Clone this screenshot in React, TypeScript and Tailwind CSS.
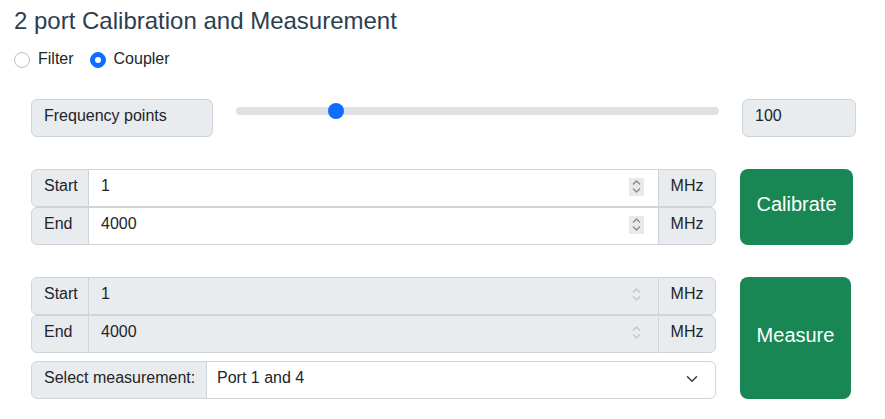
import React from "react";

function Radio({ checked, label }: { checked?: boolean; label: string }) {
  return (
    <label className="flex items-center mr-4">
      {checked ? (
        <span className="w-4 h-4 rounded-full bg-[#0d6efd] border border-[#0d6efd] flex items-center justify-center">
          <span className="w-[6px] h-[6px] rounded-full bg-white" />
        </span>
      ) : (
        <span className="w-4 h-4 rounded-full bg-white border border-[#bfbfbf]" />
      )}
      <span className="ml-2 leading-6 pb-[2px]">{label}</span>
    </label>
  );
}

function Spinner({ disabled }: { disabled?: boolean }) {
  const c = disabled ? "#c4c4c4" : "#8a8a8a";
  return (
    <div
      className={`absolute right-[14px] top-[9px] w-[15px] h-[18px] flex flex-col items-center justify-center gap-[3px] ${
        disabled ? "" : "bg-[#e9e9ed]"
      }`}
    >
      <svg width="9" height="5" viewBox="0 0 9 5" fill="none" stroke={c} strokeWidth="1.3">
        <path d="M1 4.5 4.5 1 8 4.5" />
      </svg>
      <svg width="9" height="5" viewBox="0 0 9 5" fill="none" stroke={c} strokeWidth="1.3">
        <path d="M1 0.5 4.5 4 8 0.5" />
      </svg>
    </div>
  );
}

function NumRow({
  label,
  labelW,
  value,
  disabled,
}: {
  label: string;
  labelW: string;
  value: string;
  disabled?: boolean;
}) {
  return (
    <div className="flex h-[38px]">
      <div
        className={`${labelW} shrink-0 flex items-center px-3 pb-1 bg-[#e9ecef] border border-[#ced4da] rounded-l-[6px]`}
      >
        {label}
      </div>
      <div className="relative flex-1 min-w-0 -ml-px">
        <input
          type="number"
          defaultValue={value}
          disabled={disabled}
          className={`w-full h-full px-3 pb-1 border-y border-l border-[#ced4da] outline-none text-[#212529] [appearance:textfield] [&::-webkit-inner-spin-button]:appearance-none [&::-webkit-outer-spin-button]:appearance-none ${
            disabled ? "bg-[#e9ecef]" : "bg-white"
          }`}
        />
        <Spinner disabled={disabled} />
      </div>
      <div className="w-[58px] shrink-0 flex items-center justify-center pb-1 bg-[#e9ecef] border border-[#ced4da] rounded-r-[6px]">
        MHz
      </div>
    </div>
  );
}

export default function App() {
  return (
    <div className="w-[885px] h-[419px] bg-white pl-[14px] pt-[7px] text-[16px] text-[#212529] font-['Liberation_Sans',Arial,sans-serif]">
      <h3 className="text-[24px] leading-[1.2] text-[#2c3e50] font-normal">
        2 port Calibration and Measurement
      </h3>
      <div className="flex items-center mt-[12px] h-6">
        <Radio label="Filter" />
        <Radio label="Coupler" checked />
      </div>
      <div className="ml-[17px] mt-[27px] w-[825px]">
        <div className="flex items-start">
          <div className="w-[182px] h-[38px] shrink-0 flex items-center px-3 pb-1 bg-[#e9ecef] border border-[#ced4da] rounded-[6px] whitespace-nowrap">
            Frequency points
          </div>
          <div className="ml-[23px] w-[483px] h-6 relative shrink-0">
            <div className="absolute left-0 right-0 top-2 h-2 rounded-full bg-[#dee2e6]" />
            <div className="absolute left-[92px] top-1 w-4 h-4 rounded-full bg-[#0d6efd]" />
          </div>
          <div className="ml-[23px] w-[114px] h-[38px] shrink-0 flex items-center px-3 pb-1 bg-[#e9ecef] border border-[#ced4da] rounded-[6px]">
            100
          </div>
        </div>

        <div className="flex mt-8">
          <div className="w-[685px] flex flex-col">
            <NumRow label="Start" labelW="w-[58px]" value="1" />
            <NumRow label="End" labelW="w-[58px]" value="4000" />
          </div>
          <button className="ml-6 w-[113px] h-[76px] pb-[6px] rounded-[8px] bg-[#198754] text-white text-[20px]">
            Calibrate
          </button>
        </div>

        <div className="flex mt-8">
          <div className="w-[685px] flex flex-col">
            <NumRow label="Start" labelW="w-[58px]" value="1" disabled />
            <NumRow label="End" labelW="w-[58px]" value="4000" disabled />
            <div className="flex h-[38px] mt-2">
              <div className="w-[176px] shrink-0 flex items-center px-3 pb-1 bg-[#e9ecef] border border-[#ced4da] rounded-l-[6px] whitespace-nowrap">
                Select measurement:
              </div>
              <div className="relative flex-1 -ml-px">
                <select
                  defaultValue="p14"
                  className="appearance-none w-full h-full pl-[10px] pr-9 pb-1 bg-white border border-[#ced4da] rounded-r-[6px] outline-none text-[#212529]"
                >
                  <option value="p12">Port 1 and 2</option>
                  <option value="p13">Port 1 and 3</option>
                  <option value="p14">Port 1 and 4</option>
                </select>
                <svg
                  className="absolute right-[18px] top-[12px] pointer-events-none"
                  width="12"
                  height="12"
                  viewBox="0 0 16 16"
                  fill="none"
                  stroke="#343a40"
                  strokeWidth="2"
                  strokeLinecap="round"
                  strokeLinejoin="round"
                >
                  <path d="m2 5 6 6 6-6" />
                </svg>
              </div>
            </div>
          </div>
          <button className="ml-6 w-[111px] h-[122px] pb-[6px] rounded-[8px] bg-[#198754] text-white text-[20px]">
            Measure
          </button>
        </div>
      </div>
    </div>
  );
}
